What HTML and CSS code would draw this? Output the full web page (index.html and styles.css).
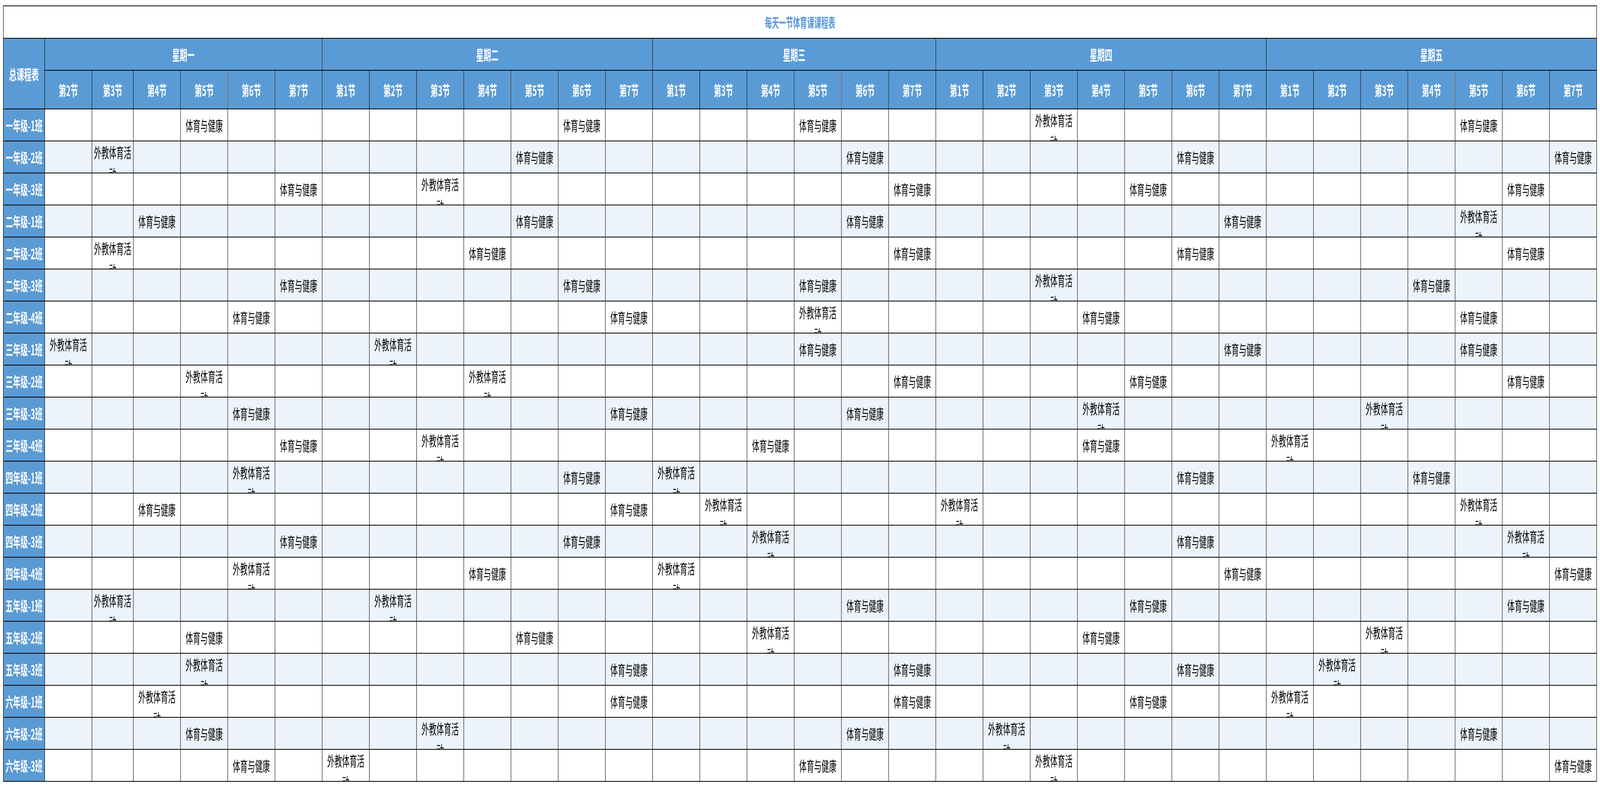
FILE: index.html
```html
<!DOCTYPE html>
<html lang="zh-CN">
<head>
<meta charset="utf-8">
<title>每天一节体育课课程表</title>
<link rel="stylesheet" href="styles.css">
</head>
<body>
<div class="frame">
<div class="sheet">
<table class="schedule">
<colgroup>
<col class="w-label">
<col class="w-std"><col class="w-narrow"><col class="w-std"><col class="w-std"><col class="w-std"><col class="w-std">
<col class="w-std"><col class="w-std"><col class="w-std"><col class="w-std"><col class="w-std"><col class="w-std"><col class="w-std">
<col class="w-std"><col class="w-std"><col class="w-std"><col class="w-std"><col class="w-std"><col class="w-std">
<col class="w-std"><col class="w-std"><col class="w-std"><col class="w-std"><col class="w-std"><col class="w-std"><col class="w-std">
<col class="w-std"><col class="w-std"><col class="w-std"><col class="w-std"><col class="w-std"><col class="w-std"><col class="w-std">
</colgroup>
<thead>
<tr class="title-row"><th class="title-cell" colspan="34">每天一节体育课课程表</th></tr>
<tr class="day-row">
<th class="corner" rowspan="2">总课程表</th>
<th class="day" colspan="6">星期一</th>
<th class="day" colspan="7">星期二</th>
<th class="day" colspan="6">星期三</th>
<th class="day" colspan="7">星期四</th>
<th class="day" colspan="7">星期五</th>
</tr>
<tr class="period-row">
<th class="period">第2节</th><th class="period">第3节</th><th class="period">第4节</th><th class="period">第5节</th><th class="period">第6节</th><th class="period">第7节</th>
<th class="period">第1节</th><th class="period">第2节</th><th class="period">第3节</th><th class="period">第4节</th><th class="period">第5节</th><th class="period">第6节</th><th class="period">第7节</th>
<th class="period">第1节</th><th class="period">第3节</th><th class="period">第4节</th><th class="period">第5节</th><th class="period">第6节</th><th class="period">第7节</th>
<th class="period">第1节</th><th class="period">第2节</th><th class="period">第3节</th><th class="period">第4节</th><th class="period">第5节</th><th class="period">第6节</th><th class="period">第7节</th>
<th class="period">第1节</th><th class="period">第2节</th><th class="period">第3节</th><th class="period">第4节</th><th class="period">第5节</th><th class="period">第6节</th><th class="period">第7节</th>
</tr>
</thead>
<tbody>
<tr class="data-row">
<th class="class-name">一年级-1班</th>
<td></td><td></td><td></td><td><div class="cell">体育与健康</div></td><td></td><td></td>
<td></td><td></td><td></td><td></td><td></td><td><div class="cell">体育与健康</div></td><td></td>
<td></td><td></td><td></td><td><div class="cell">体育与健康</div></td><td></td><td></td>
<td></td><td></td><td><div class="cell">外教体育活动</div></td><td></td><td></td><td></td><td></td>
<td></td><td></td><td></td><td></td><td><div class="cell">体育与健康</div></td><td></td><td></td>
</tr>
<tr class="data-row alt">
<th class="class-name">一年级-2班</th>
<td></td><td><div class="cell">外教体育活动</div></td><td></td><td></td><td></td><td></td>
<td></td><td></td><td></td><td></td><td><div class="cell">体育与健康</div></td><td></td><td></td>
<td></td><td></td><td></td><td></td><td><div class="cell">体育与健康</div></td><td></td>
<td></td><td></td><td></td><td></td><td></td><td><div class="cell">体育与健康</div></td><td></td>
<td></td><td></td><td></td><td></td><td></td><td></td><td><div class="cell">体育与健康</div></td>
</tr>
<tr class="data-row">
<th class="class-name">一年级-3班</th>
<td></td><td></td><td></td><td></td><td></td><td><div class="cell">体育与健康</div></td>
<td></td><td></td><td><div class="cell">外教体育活动</div></td><td></td><td></td><td></td><td></td>
<td></td><td></td><td></td><td></td><td></td><td><div class="cell">体育与健康</div></td>
<td></td><td></td><td></td><td></td><td><div class="cell">体育与健康</div></td><td></td><td></td>
<td></td><td></td><td></td><td></td><td></td><td><div class="cell">体育与健康</div></td><td></td>
</tr>
<tr class="data-row alt">
<th class="class-name">二年级-1班</th>
<td></td><td></td><td><div class="cell">体育与健康</div></td><td></td><td></td><td></td>
<td></td><td></td><td></td><td></td><td><div class="cell">体育与健康</div></td><td></td><td></td>
<td></td><td></td><td></td><td></td><td><div class="cell">体育与健康</div></td><td></td>
<td></td><td></td><td></td><td></td><td></td><td></td><td><div class="cell">体育与健康</div></td>
<td></td><td></td><td></td><td></td><td><div class="cell">外教体育活动</div></td><td></td><td></td>
</tr>
<tr class="data-row">
<th class="class-name">二年级-2班</th>
<td></td><td><div class="cell">外教体育活动</div></td><td></td><td></td><td></td><td></td>
<td></td><td></td><td></td><td><div class="cell">体育与健康</div></td><td></td><td></td><td></td>
<td></td><td></td><td></td><td></td><td></td><td><div class="cell">体育与健康</div></td>
<td></td><td></td><td></td><td></td><td></td><td><div class="cell">体育与健康</div></td><td></td>
<td></td><td></td><td></td><td></td><td></td><td><div class="cell">体育与健康</div></td><td></td>
</tr>
<tr class="data-row alt">
<th class="class-name">二年级-3班</th>
<td></td><td></td><td></td><td></td><td></td><td><div class="cell">体育与健康</div></td>
<td></td><td></td><td></td><td></td><td></td><td><div class="cell">体育与健康</div></td><td></td>
<td></td><td></td><td></td><td><div class="cell">体育与健康</div></td><td></td><td></td>
<td></td><td></td><td><div class="cell">外教体育活动</div></td><td></td><td></td><td></td><td></td>
<td></td><td></td><td></td><td><div class="cell">体育与健康</div></td><td></td><td></td><td></td>
</tr>
<tr class="data-row">
<th class="class-name">二年级-4班</th>
<td></td><td></td><td></td><td></td><td><div class="cell">体育与健康</div></td><td></td>
<td></td><td></td><td></td><td></td><td></td><td></td><td><div class="cell">体育与健康</div></td>
<td></td><td></td><td></td><td><div class="cell">外教体育活动</div></td><td></td><td></td>
<td></td><td></td><td></td><td><div class="cell">体育与健康</div></td><td></td><td></td><td></td>
<td></td><td></td><td></td><td></td><td><div class="cell">体育与健康</div></td><td></td><td></td>
</tr>
<tr class="data-row alt">
<th class="class-name">三年级-1班</th>
<td><div class="cell">外教体育活动</div></td><td></td><td></td><td></td><td></td><td></td>
<td></td><td><div class="cell">外教体育活动</div></td><td></td><td></td><td></td><td></td><td></td>
<td></td><td></td><td></td><td><div class="cell">体育与健康</div></td><td></td><td></td>
<td></td><td></td><td></td><td></td><td></td><td></td><td><div class="cell">体育与健康</div></td>
<td></td><td></td><td></td><td></td><td><div class="cell">体育与健康</div></td><td></td><td></td>
</tr>
<tr class="data-row">
<th class="class-name">三年级-2班</th>
<td></td><td></td><td></td><td><div class="cell">外教体育活动</div></td><td></td><td></td>
<td></td><td></td><td></td><td><div class="cell">外教体育活动</div></td><td></td><td></td><td></td>
<td></td><td></td><td></td><td></td><td></td><td><div class="cell">体育与健康</div></td>
<td></td><td></td><td></td><td></td><td><div class="cell">体育与健康</div></td><td></td><td></td>
<td></td><td></td><td></td><td></td><td></td><td><div class="cell">体育与健康</div></td><td></td>
</tr>
<tr class="data-row alt">
<th class="class-name">三年级-3班</th>
<td></td><td></td><td></td><td></td><td><div class="cell">体育与健康</div></td><td></td>
<td></td><td></td><td></td><td></td><td></td><td></td><td><div class="cell">体育与健康</div></td>
<td></td><td></td><td></td><td></td><td><div class="cell">体育与健康</div></td><td></td>
<td></td><td></td><td></td><td><div class="cell">外教体育活动</div></td><td></td><td></td><td></td>
<td></td><td></td><td><div class="cell">外教体育活动</div></td><td></td><td></td><td></td><td></td>
</tr>
<tr class="data-row">
<th class="class-name">三年级-4班</th>
<td></td><td></td><td></td><td></td><td></td><td><div class="cell">体育与健康</div></td>
<td></td><td></td><td><div class="cell">外教体育活动</div></td><td></td><td></td><td></td><td></td>
<td></td><td></td><td><div class="cell">体育与健康</div></td><td></td><td></td><td></td>
<td></td><td></td><td></td><td><div class="cell">体育与健康</div></td><td></td><td></td><td></td>
<td><div class="cell">外教体育活动</div></td><td></td><td></td><td></td><td></td><td></td><td></td>
</tr>
<tr class="data-row alt">
<th class="class-name">四年级-1班</th>
<td></td><td></td><td></td><td></td><td><div class="cell">外教体育活动</div></td><td></td>
<td></td><td></td><td></td><td></td><td></td><td><div class="cell">体育与健康</div></td><td></td>
<td><div class="cell">外教体育活动</div></td><td></td><td></td><td></td><td></td><td></td>
<td></td><td></td><td></td><td></td><td></td><td><div class="cell">体育与健康</div></td><td></td>
<td></td><td></td><td></td><td><div class="cell">体育与健康</div></td><td></td><td></td><td></td>
</tr>
<tr class="data-row">
<th class="class-name">四年级-2班</th>
<td></td><td></td><td><div class="cell">体育与健康</div></td><td></td><td></td><td></td>
<td></td><td></td><td></td><td></td><td></td><td></td><td><div class="cell">体育与健康</div></td>
<td></td><td><div class="cell">外教体育活动</div></td><td></td><td></td><td></td><td></td>
<td><div class="cell">外教体育活动</div></td><td></td><td></td><td></td><td></td><td></td><td></td>
<td></td><td></td><td></td><td></td><td><div class="cell">外教体育活动</div></td><td></td><td></td>
</tr>
<tr class="data-row alt">
<th class="class-name">四年级-3班</th>
<td></td><td></td><td></td><td></td><td></td><td><div class="cell">体育与健康</div></td>
<td></td><td></td><td></td><td></td><td></td><td><div class="cell">体育与健康</div></td><td></td>
<td></td><td></td><td><div class="cell">外教体育活动</div></td><td></td><td></td><td></td>
<td></td><td></td><td></td><td></td><td></td><td><div class="cell">体育与健康</div></td><td></td>
<td></td><td></td><td></td><td></td><td></td><td><div class="cell">外教体育活动</div></td><td></td>
</tr>
<tr class="data-row">
<th class="class-name">四年级-4班</th>
<td></td><td></td><td></td><td></td><td><div class="cell">外教体育活动</div></td><td></td>
<td></td><td></td><td></td><td><div class="cell">体育与健康</div></td><td></td><td></td><td></td>
<td><div class="cell">外教体育活动</div></td><td></td><td></td><td></td><td></td><td></td>
<td></td><td></td><td></td><td></td><td></td><td></td><td><div class="cell">体育与健康</div></td>
<td></td><td></td><td></td><td></td><td></td><td></td><td><div class="cell">体育与健康</div></td>
</tr>
<tr class="data-row alt">
<th class="class-name">五年级-1班</th>
<td></td><td><div class="cell">外教体育活动</div></td><td></td><td></td><td></td><td></td>
<td></td><td><div class="cell">外教体育活动</div></td><td></td><td></td><td></td><td></td><td></td>
<td></td><td></td><td></td><td></td><td><div class="cell">体育与健康</div></td><td></td>
<td></td><td></td><td></td><td></td><td><div class="cell">体育与健康</div></td><td></td><td></td>
<td></td><td></td><td></td><td></td><td></td><td><div class="cell">体育与健康</div></td><td></td>
</tr>
<tr class="data-row">
<th class="class-name">五年级-2班</th>
<td></td><td></td><td></td><td><div class="cell">体育与健康</div></td><td></td><td></td>
<td></td><td></td><td></td><td></td><td><div class="cell">体育与健康</div></td><td></td><td></td>
<td></td><td></td><td><div class="cell">外教体育活动</div></td><td></td><td></td><td></td>
<td></td><td></td><td></td><td><div class="cell">体育与健康</div></td><td></td><td></td><td></td>
<td></td><td></td><td><div class="cell">外教体育活动</div></td><td></td><td></td><td></td><td></td>
</tr>
<tr class="data-row alt">
<th class="class-name">五年级-3班</th>
<td></td><td></td><td></td><td><div class="cell">外教体育活动</div></td><td></td><td></td>
<td></td><td></td><td></td><td></td><td></td><td></td><td><div class="cell">体育与健康</div></td>
<td></td><td></td><td></td><td></td><td></td><td><div class="cell">体育与健康</div></td>
<td></td><td></td><td></td><td></td><td></td><td><div class="cell">体育与健康</div></td><td></td>
<td></td><td><div class="cell">外教体育活动</div></td><td></td><td></td><td></td><td></td><td></td>
</tr>
<tr class="data-row">
<th class="class-name">六年级-1班</th>
<td></td><td></td><td><div class="cell">外教体育活动</div></td><td></td><td></td><td></td>
<td></td><td></td><td></td><td></td><td></td><td></td><td><div class="cell">体育与健康</div></td>
<td></td><td></td><td></td><td></td><td></td><td><div class="cell">体育与健康</div></td>
<td></td><td></td><td></td><td></td><td><div class="cell">体育与健康</div></td><td></td><td></td>
<td><div class="cell">外教体育活动</div></td><td></td><td></td><td></td><td></td><td></td><td></td>
</tr>
<tr class="data-row alt">
<th class="class-name">六年级-2班</th>
<td></td><td></td><td></td><td><div class="cell">体育与健康</div></td><td></td><td></td>
<td></td><td></td><td><div class="cell">外教体育活动</div></td><td></td><td></td><td></td><td></td>
<td></td><td></td><td></td><td></td><td><div class="cell">体育与健康</div></td><td></td>
<td></td><td><div class="cell">外教体育活动</div></td><td></td><td></td><td></td><td></td><td></td>
<td></td><td></td><td></td><td></td><td><div class="cell">体育与健康</div></td><td></td><td></td>
</tr>
<tr class="data-row">
<th class="class-name">六年级-3班</th>
<td></td><td></td><td></td><td></td><td><div class="cell">体育与健康</div></td><td></td>
<td><div class="cell">外教体育活动</div></td><td></td><td></td><td></td><td></td><td></td><td></td>
<td></td><td></td><td></td><td><div class="cell">体育与健康</div></td><td></td><td></td>
<td></td><td></td><td><div class="cell">外教体育活动</div></td><td></td><td></td><td></td><td></td>
<td></td><td></td><td></td><td></td><td></td><td></td><td><div class="cell">体育与健康</div></td>
</tr>
</tbody>
</table>
</div>
</div>
<script src="app.js"></script>
</body>
</html>
```

FILE: styles.css
```css
html, body {
  margin: 0;
  padding: 0;
  background: #ffffff;
  overflow: hidden;
}

body {
  font-family: "Noto Sans CJK SC", "Noto Sans", sans-serif;
  color: #000000;
}

/* Clips the sheet to the window so nothing scrolls sideways. */
.frame {
  width: 100vw;
  height: 100vh;
  overflow: clip;
}

/* The sheet is laid out at its native 7728px width and squeezed
   horizontally (--sx, set from the viewport) when the window is narrower. */
.sheet {
  width: 7728px;
  box-sizing: border-box;
  padding: 14px 15px;
  transform: scaleX(var(--sx, 1));
  transform-origin: 0 0;
}

.schedule {
  border-collapse: collapse;
  table-layout: fixed;
  width: 7696px;
}

.w-label { width: 200px; }
.w-std { width: 228px; }
.w-narrow { width: 200px; }

.schedule th,
.schedule td {
  border: 2px solid #000000;
  padding: 0;
  text-align: center;
  vertical-align: middle;
  overflow: hidden;
}

.title-row { height: 83px; }
.day-row { height: 82px; }
.period-row { height: 99px; }
.data-row { height: 82px; }

.title-cell {
  background: #ffffff;
  color: #5b9bd5;
  font-size: 34px;
  font-weight: 700;
  line-height: 1;
}

.corner,
.day,
.period,
.class-name {
  background: #5b9bd5;
  color: #ffffff;
  font-size: 36px;
  font-weight: 700;
  line-height: 1;
  white-space: nowrap;
}

.data-row td {
  background: #ffffff;
}

.data-row.alt td {
  background: #ecf3fb;
}

.cell {
  height: 80px;
  overflow: hidden;
  display: flex;
  align-items: safe center;
  justify-content: center;
  padding: 0 8px;
  font-size: 36px;
  line-height: 55px;
  text-align: center;
}
```

FILE: app.js
```js
(function () {
  var designWidth = 7728;
  var sx = Math.min(1, window.innerWidth / designWidth);
  document.documentElement.style.setProperty('--sx', String(sx));
})();
```
